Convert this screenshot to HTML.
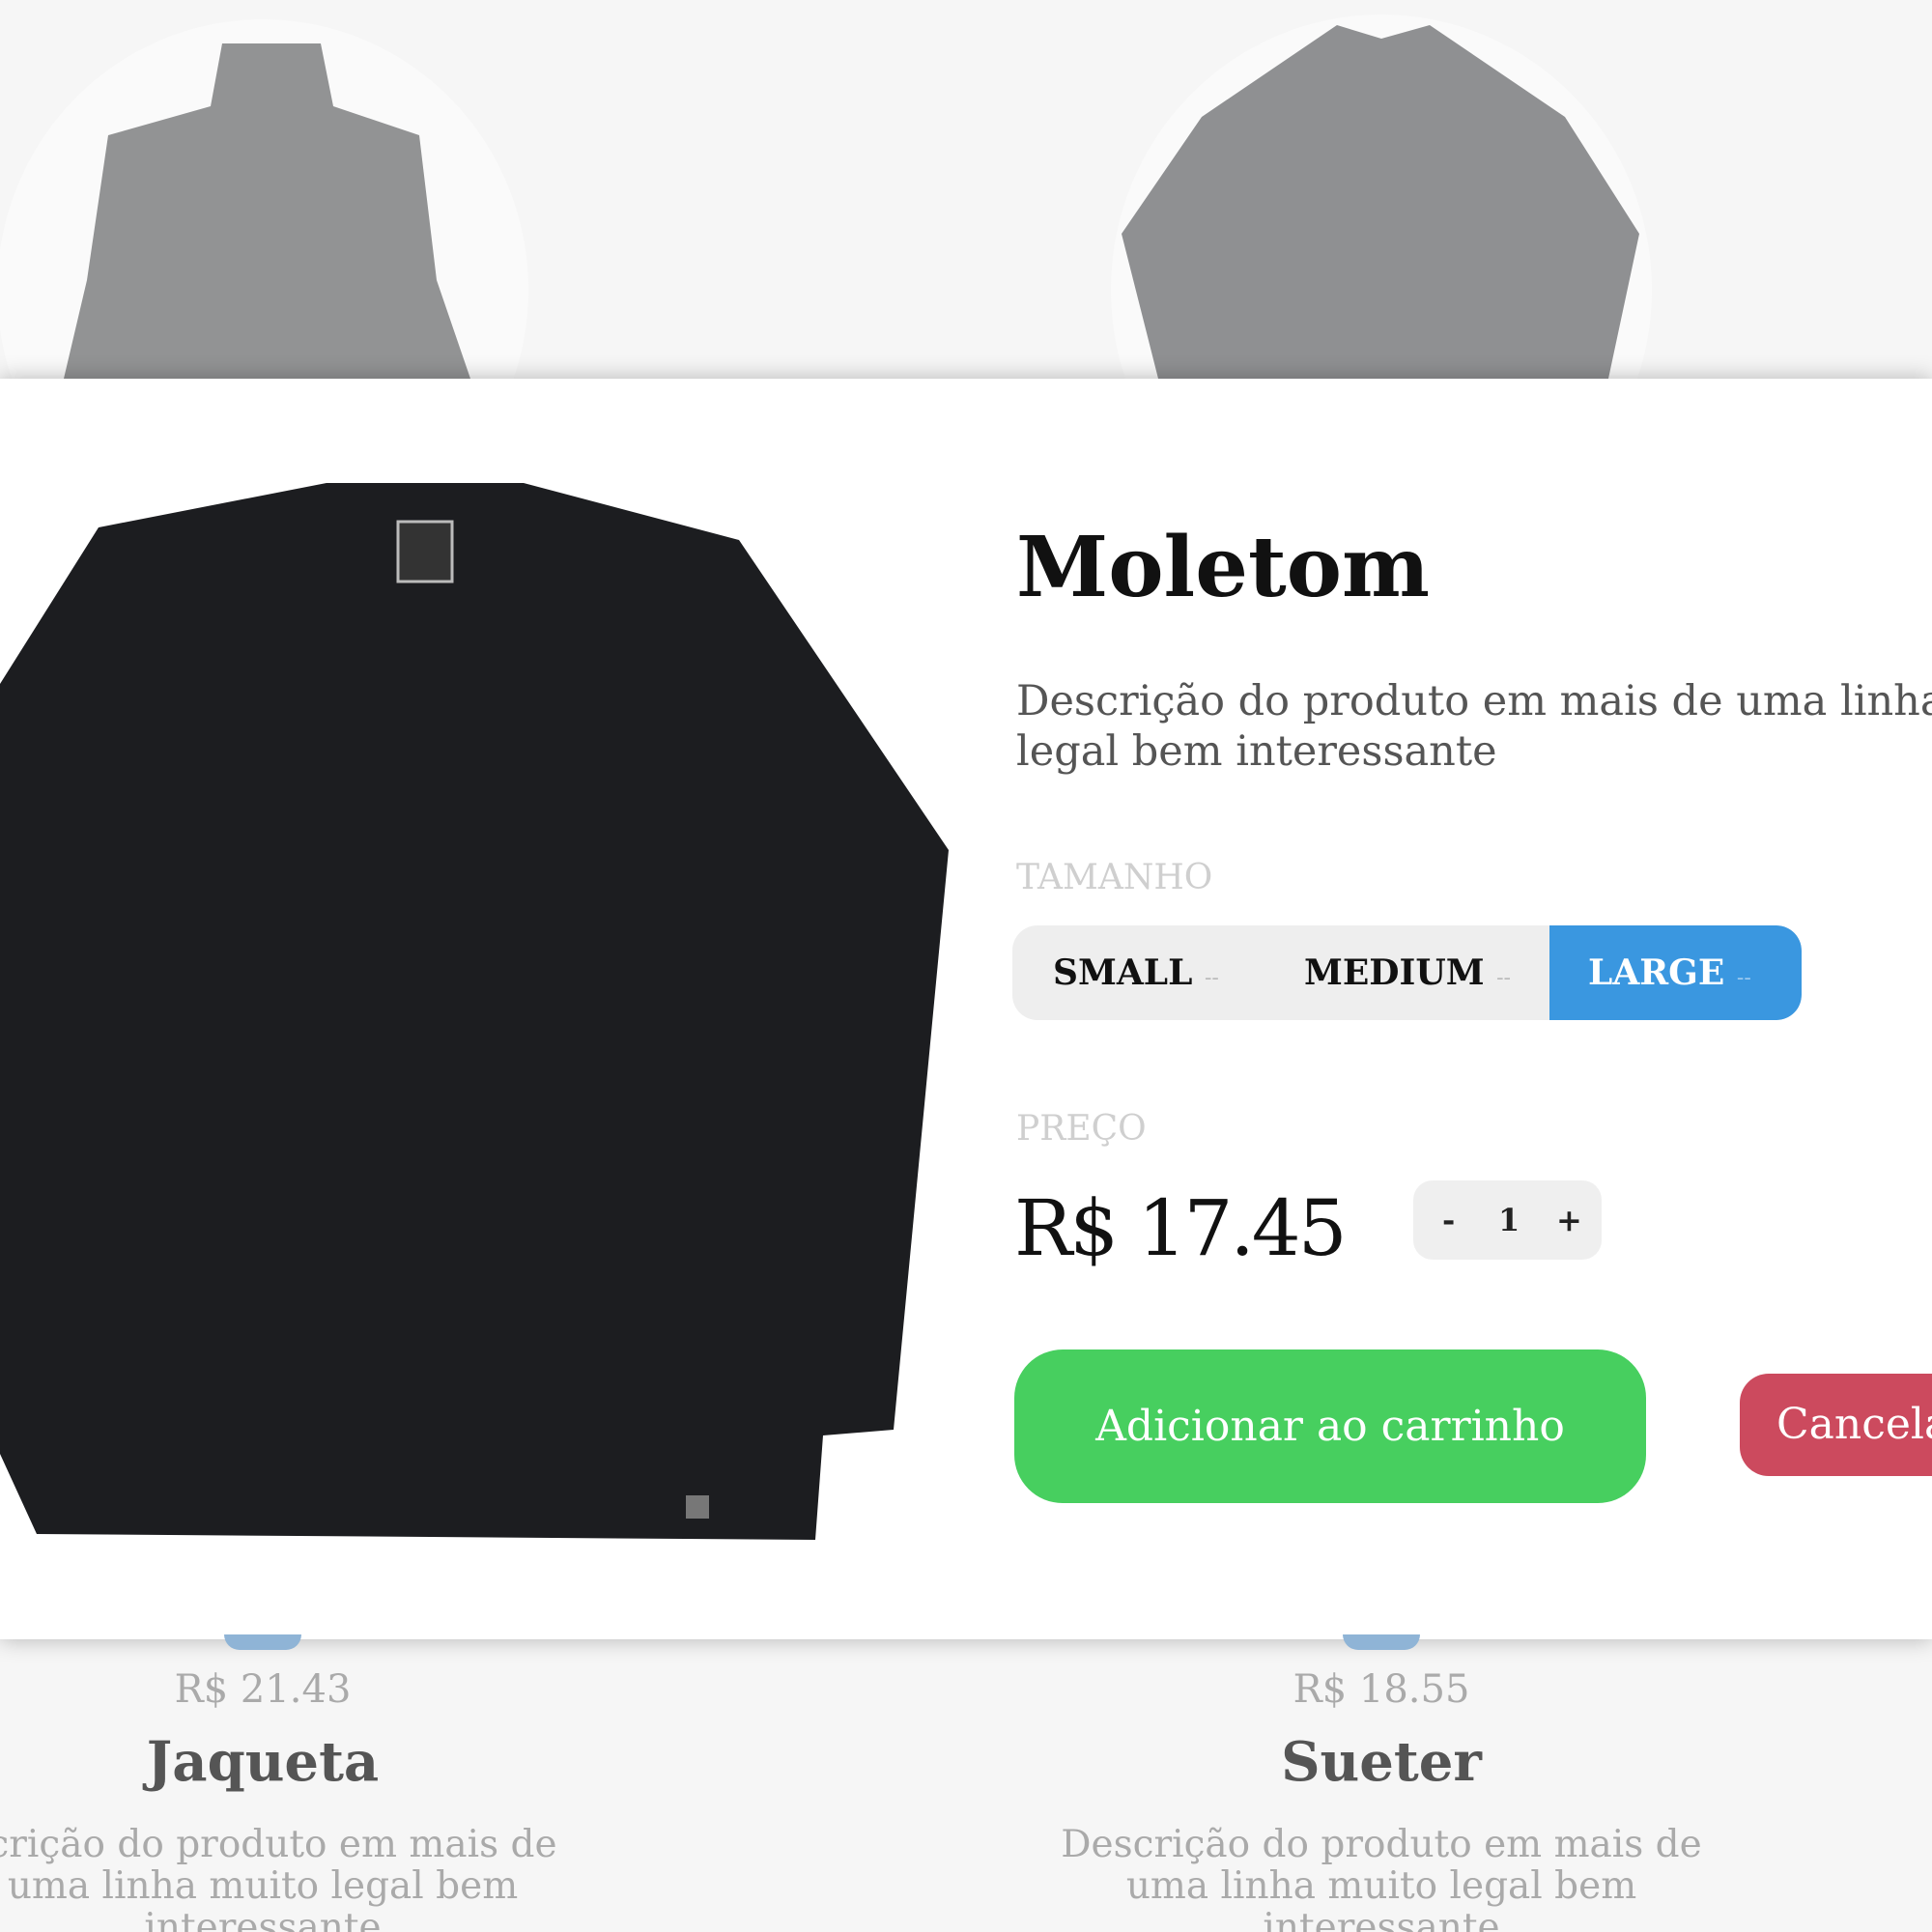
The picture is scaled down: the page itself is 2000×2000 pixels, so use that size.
<!DOCTYPE html>
<html><head><meta charset="utf-8"><style>
*{margin:0;padding:0;box-sizing:border-box}
html,body{width:2000px;height:2000px;overflow:hidden}
body{background:#f6f6f6;font-family:"DejaVu Serif","Liberation Serif",serif}
#w{position:relative;width:2000px;height:2000px;overflow:hidden}
.abs{position:absolute}
.modal{left:0;top:392px;width:2000px;height:1305px;background:#fff;box-shadow:0 0 22px rgba(0,0,0,.28)}
.lbl{color:#cfcfcf;font-size:36px}
.seg{left:1048px;top:958px;width:817px;height:98px;background:#eeeeee;border-radius:26px;overflow:hidden}
.seg div{position:absolute;top:0;height:98px;line-height:98px;font-weight:bold;font-size:36px;color:#111}
.seg span{color:#bbb;font-weight:normal;font-size:22px}
.btm{color:#aaa;text-align:center;width:760px}
</style></head><body><div id="w">
<svg class="abs" style="left:0;top:0" width="2000" height="400">
<ellipse cx="272" cy="300" rx="275" ry="280" fill="#fafafa"/>
<ellipse cx="1430" cy="300" rx="280" ry="285" fill="#fafafa"/>
<path d="M230 45 L332 45 L345 110 L434 140 L452 290 L487 392 L66 392 L90 290 L112 140 L218 110 Z" fill="#929394"/>
<path d="M1384 26 L1430 40 L1480 26 L1620 121 L1697 242 L1665 392 L1199 392 L1161 242 L1244 121 Z" fill="#8f9092"/>
</svg>
<div class="abs modal"></div>
<svg class="abs" style="left:0;top:0" width="1000" height="1700">
<path d="M338 500 L542 500 L765 559 L982 880 L925 1480 L852 1486 L844 1594 L38 1588 L0 1505 L0 708 L102 546 Z" fill="#1c1d20"/>
<rect x="412" y="540" width="56" height="62" fill="#333" stroke="#bbb" stroke-width="3"/>
<rect x="710" y="1548" width="24" height="24" fill="#777"/>
</svg>
<div class="abs" style="left:1052px;top:533px;font-size:86px;font-weight:bold;color:#111;line-height:110px">Moletom</div>
<div class="abs" style="left:1052px;top:700px;width:948px;overflow:hidden;font-size:43px;color:#555;line-height:52px;white-space:nowrap">Descrição do produto em mais de uma linha muito<br>legal bem interessante</div>
<div class="abs lbl" style="left:1052px;top:888px">TAMANHO</div>
<div class="abs seg">
<div style="left:42px">SMALL <span>--</span></div>
<div style="left:302px">MEDIUM <span>--</span></div>
<div style="left:556px;width:261px;background:#3a97e0;color:#fff;padding-left:40px;border-radius:0 26px 26px 0">LARGE <span style="color:#9cc9ef">--</span></div>
</div>
<div class="abs lbl" style="left:1052px;top:1148px">PREÇO</div>
<div class="abs" style="left:1050px;top:1222px;font-size:80px;color:#111;line-height:100px;letter-spacing:-3px">R$ 17.45</div>
<div class="abs" style="left:1463px;top:1222px;width:195px;height:82px;background:#efefef;border-radius:20px;font-size:32px;font-weight:bold;color:#222;line-height:82px">
<span class="abs" style="left:30px">-</span><span class="abs" style="left:88px">1</span><span class="abs" style="left:148px">+</span></div>
<div class="abs" style="left:1050px;top:1397px;width:654px;height:159px;background:#47cf5f;border-radius:50px;color:#fff;font-size:44px;text-align:center;line-height:159px">Adicionar ao carrinho</div>
<div class="abs" style="left:1801px;top:1422px;width:199px;height:106px;background:#cc4a5e;border-radius:30px 0 0 30px;color:#fff;font-size:44px;line-height:106px;padding-left:38px;overflow:hidden;white-space:nowrap">Cancelar</div>
<div class="abs" style="left:232px;top:1692px;width:80px;height:16px;border-radius:0 0 40px 40px;background:#8fb4d6"></div>
<div class="abs" style="left:1390px;top:1692px;width:80px;height:16px;border-radius:0 0 40px 40px;background:#8fb4d6"></div>
<div class="abs btm" style="left:-108px;top:1726px;font-size:40px">R$ 21.43</div>
<div class="abs btm" style="left:-108px;top:1791px;font-size:56px;font-weight:bold;color:#555">Jaqueta</div>
<div class="abs btm" style="left:-108px;top:1888px;font-size:39px;line-height:43px">scrição do produto em mais de<br>uma linha muito legal bem<br>interessante</div>
<div class="abs btm" style="left:1050px;top:1726px;font-size:40px">R$ 18.55</div>
<div class="abs btm" style="left:1050px;top:1791px;font-size:56px;font-weight:bold;color:#555">Sueter</div>
<div class="abs btm" style="left:1050px;top:1888px;font-size:39px;line-height:43px">Descrição do produto em mais de<br>uma linha muito legal bem<br>interessante</div>
</div></body></html>
